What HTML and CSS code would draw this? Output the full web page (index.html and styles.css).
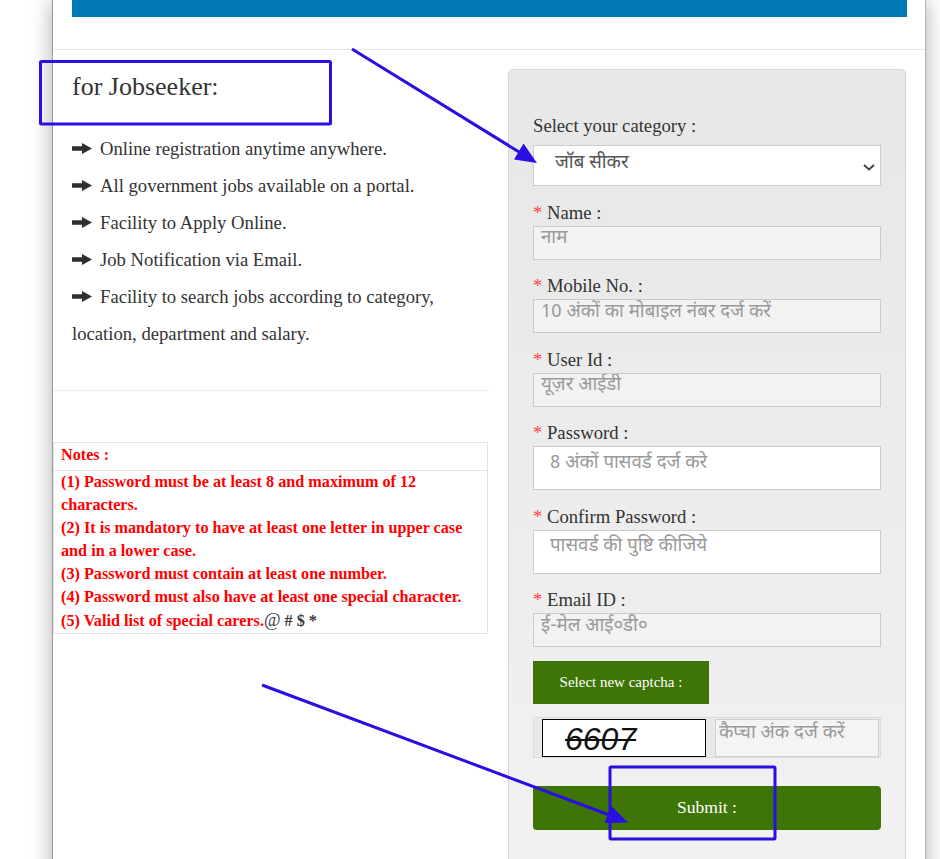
FILE: index.html
```html
<!DOCTYPE html>
<html lang="hi">
<head>
<meta charset="utf-8">
<title>Jobseeker Registration</title>
<link rel="stylesheet" href="styles.css">
</head>
<body>
<div class="page">
  <div class="masthead">
    <div class="topbar"></div>
  </div>
  <div class="content">
    <div class="col-left">
      <div class="intro">
        <h2 class="intro-title">for Jobseeker:</h2>
        <div class="feat"><svg class="arrow" viewBox="0 0 20 11"><path d="M0 3.2H10V0L20 5.5L10 11V7.8H0Z"/></svg>Online registration anytime anywhere.</div>
        <div class="feat"><svg class="arrow" viewBox="0 0 20 11"><path d="M0 3.2H10V0L20 5.5L10 11V7.8H0Z"/></svg>All government jobs available on a portal.</div>
        <div class="feat"><svg class="arrow" viewBox="0 0 20 11"><path d="M0 3.2H10V0L20 5.5L10 11V7.8H0Z"/></svg>Facility to Apply Online.</div>
        <div class="feat"><svg class="arrow" viewBox="0 0 20 11"><path d="M0 3.2H10V0L20 5.5L10 11V7.8H0Z"/></svg>Job Notification via Email.</div>
        <div class="feat"><svg class="arrow" viewBox="0 0 20 11"><path d="M0 3.2H10V0L20 5.5L10 11V7.8H0Z"/></svg>Facility to search jobs according to category, location, department and salary.</div>
      </div>
      <hr class="sep">
      <div class="notes">
        <div class="notes-head">Notes :</div>
        <div class="notes-body">
          <div>(1) Password must be at least 8 and maximum of 12 characters.</div>
          <div>(2) It is mandatory to have at least one letter in upper case and in a lower case.</div>
          <div>(3) Password must contain at least one number.</div>
          <div>(4) Password must also have at least one special character.</div>
          <div>(5) Valid list of special carers.<span class="specials"><span class="at">@</span> # $ *</span></div>
        </div>
      </div>
    </div>
    <div class="col-right">
      <form class="panel">
        <div class="group group-first">
          <label class="label label-cat">Select your category :</label>
          <div class="select-wrap">
            <select class="select">
              <option>जॉब सीकर</option>
            </select>
            <svg class="chev" viewBox="0 0 12 7"><path d="M1 1L6 5.5L11 1"/></svg>
          </div>
        </div>
        <div class="group">
          <label class="label"><span class="req">*</span> Name :</label>
          <input class="field field-grey" type="text" placeholder="नाम">
        </div>
        <div class="group">
          <label class="label"><span class="req">*</span> Mobile No. :</label>
          <input class="field field-grey" type="text" placeholder="10 अंकों का मोबाइल नंबर दर्ज करें">
        </div>
        <div class="group">
          <label class="label"><span class="req">*</span> User Id :</label>
          <input class="field field-grey" type="text" placeholder="यूज़र आईडी">
        </div>
        <div class="group">
          <label class="label"><span class="req">*</span> Password :</label>
          <input class="field field-tall" type="password" placeholder="8 अंकों पासवर्ड दर्ज करे">
        </div>
        <div class="group">
          <label class="label"><span class="req">*</span> Confirm Password :</label>
          <input class="field field-tall" type="password" placeholder="पासवर्ड की पुष्टि कीजिये">
        </div>
        <div class="group">
          <label class="label"><span class="req">*</span> Email ID :</label>
          <input class="field field-grey" type="text" placeholder="ई-मेल आई०डी०">
        </div>
        <button type="button" class="btn-captcha">Select new captcha :</button>
        <div class="captcha-row">
          <div class="captcha-img"><span class="captcha-code">6607</span></div>
          <input class="captcha-input" type="text" placeholder="कैप्चा अंक दर्ज करें">
        </div>
        <button type="button" class="btn-submit">Submit :</button>
      </form>
    </div>
  </div>
</div>
<svg class="annotations" viewBox="0 0 940 859" width="940" height="859">
  <rect x="40.5" y="61.5" width="290" height="62.5" rx="1"/>
  <line x1="352" y1="49" x2="524" y2="155"/>
  <polygon points="537,163 514,159.5 523.5,143.5"/>
  <line x1="262" y1="685" x2="612" y2="816"/>
  <polygon points="628,822.5 604.5,823 611,805.5"/>
  <rect x="610" y="767" width="165" height="72" rx="1"/>
</svg>
</body>
</html>
```
FILE: styles.css
```css
* {
  box-sizing: border-box;
}

html,
body {
  margin: 0;
  padding: 0;
  width: 940px;
  height: 859px;
  overflow: hidden;
  background: #fff;
}

body {
  position: relative;
  font-family: "Liberation Serif", "Times New Roman", serif;
  color: #333;
}

.page {
  margin-left: 52px;
  width: 874px;
  min-height: 900px;
  background: #fff;
  border-left: 1px solid #9c9c9c;
  border-right: 1px solid #b4b4b4;
  box-shadow: 0 0 20px rgba(0, 0, 0, 0.32);
}

.masthead {
  height: 50px;
  padding: 0 18px 0 19px;
  border-bottom: 1px solid #e6e6e6;
}

.topbar {
  height: 17px;
  background: #0179b4;
}

.content {
  display: flex;
}

.col-left {
  width: 436px;
}

.col-right {
  width: 436px;
  padding: 19px 19px 0 19px;
}

/* left column */
.intro {
  padding: 22px 19px 0 19px;
}

.intro-title {
  margin: 0 0 28px;
  font-size: 26px;
  line-height: 30px;
  font-weight: normal;
  color: #333;
}

.feat {
  font-size: 18.67px;
  line-height: 37px;
  color: #333;
}

.arrow {
  width: 20px;
  height: 11px;
  margin-right: 8px;
  vertical-align: 1px;
  fill: #2f2f2f;
}

.sep {
  margin: 38px 0 0;
  height: 0;
  border: 0;
  border-top: 1px solid #ececec;
}

.notes {
  margin: 51px 1px 0 0;
  border: 1px solid #e3e3e3;
  color: #f00;
  font-weight: bold;
  font-size: 16.2px;
  line-height: 23px;
}

.notes-head {
  padding: 1px 7px 3px;
  border-bottom: 1px solid #e3e3e3;
}

.notes-body {
  padding: 0 7px;
}

.specials {
  color: #3a3a3a;
}

.at {
  font-weight: normal;
  font-size: 18px;
}

/* right column form */
.panel {
  margin: 0;
  height: 820px;
  padding: 45px 24px 0;
  border: 1px solid #d8d8d8;
  border-radius: 5px;
  background: linear-gradient(#e7e7e7, #f1f1f1 95%);
  box-shadow: 0 0 2px rgba(0, 0, 0, 0.06);
}

.group {
  margin-top: 15.5px;
}

.group-first {
  margin-top: 0;
}

.label {
  display: block;
  margin-bottom: 2px;
  font-size: 18.67px;
  line-height: 22px;
  color: #333;
}

.label-cat {
  margin-bottom: 8px;
}

.req {
  color: #f44;
}

.select-wrap {
  position: relative;
}

.select {
  display: block;
  width: 100%;
  height: 41px;
  margin: 0;
  padding: 0 30px 5px 21px;
  -webkit-appearance: none;
  appearance: none;
  border: 1px solid #cdcdcd;
  border-radius: 0;
  background: #fff;
  color: #555;
  font-family: "Noto Sans Devanagari", "Lohit Devanagari", "Noto Sans", sans-serif;
  font-size: 18.67px;
}

.chev {
  position: absolute;
  right: 6px;
  top: 19px;
  width: 12px;
  height: 7px;
  fill: none;
  stroke: #444;
  stroke-width: 2;
}

.field {
  display: block;
  width: 100%;
  height: 34px;
  margin: 0;
  padding: 0 7px 8px;
  border: 1px solid #cbcbcb;
  border-radius: 0;
  background: #fff;
  color: #555;
  font-family: "Noto Sans Devanagari", "Lohit Devanagari", "Noto Sans", sans-serif;
  font-size: 18.67px;
  outline: none;
}

.field::placeholder,
.captcha-input::placeholder {
  color: #9a9a9a;
  opacity: 1;
}

.field-grey {
  background: #f2f2f2;
}

.field-tall {
  height: 44px;
  padding: 0 16px 10px;
}

.btn-captcha {
  display: flex;
  align-items: center;
  justify-content: center;
  width: 176px;
  height: 43px;
  margin-top: 13.5px;
  padding: 0;
  border: 0;
  background: #3f7506;
  color: #fff;
  font-family: "Liberation Serif", "Times New Roman", serif;
  font-size: 15px;
}

.captcha-row {
  display: flex;
  gap: 9px;
  height: 41px;
  margin-top: 13px;
  padding: 1px 1px 0 8px;
  border: 1px solid #dcdcdc;
  background: #e9e9e9;
}

.captcha-img {
  flex: 0 0 164px;
  width: 164px;
  height: 38px;
  padding: 0 0 0 22px;
  border: 1px solid #000;
  background: #fff;
}

.captcha-code {
  display: block;
  font-family: "Liberation Sans", Arial, sans-serif;
  font-style: italic;
  font-size: 32px;
  line-height: 38px;
  color: #111;
  text-decoration: line-through;
  text-decoration-thickness: 2px;
}

.captcha-input {
  flex: 1 1 auto;
  min-width: 0;
  height: 38px;
  margin: 0;
  padding: 0 3px 9px;
  border: 1px solid #cfcfcf;
  background: #f4f4f4;
  font-family: "Noto Sans Devanagari", "Lohit Devanagari", "Noto Sans", sans-serif;
  font-size: 18.67px;
  outline: none;
}

.btn-submit {
  display: flex;
  align-items: center;
  justify-content: center;
  width: 100%;
  height: 44px;
  margin-top: 28px;
  padding: 0;
  border: 0;
  border-radius: 4px;
  background: #3f7506;
  color: #fff;
  font-family: "Liberation Serif", "Times New Roman", serif;
  font-size: 17.5px;
}

/* annotation overlay */
.annotations {
  position: absolute;
  left: 0;
  top: 0;
  pointer-events: none;
}

.annotations rect,
.annotations line {
  fill: none;
  stroke: #2a0fe2;
  stroke-width: 3;
}

.annotations polygon {
  fill: #2a0fe2;
}
```
